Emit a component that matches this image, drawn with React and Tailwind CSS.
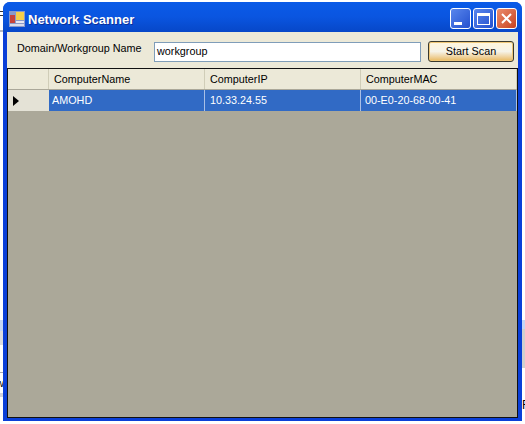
import React from "react";

function CaptionButton({ className, children }) {
  return (
    <div className={"w-[21px] h-[21px] rounded-[3px] border border-white flex items-center justify-center " + className}>
      {children}
    </div>
  );
}

function HeaderCell({ label }) {
  return (
    <div className="flex items-center pl-[5px] pt-[1px] border-r border-[#d0cdb8]">
      {label}
    </div>
  );
}

function RowCell({ label, className }) {
  return (
    <div className={"flex items-center bg-[#316ac5] border-r border-[#a9bfe6] " + className}>
      {label}
    </div>
  );
}

export default function App() {
  return (
    <div className="relative w-[525px] h-[424px] overflow-hidden bg-white font-['Liberation_Sans',sans-serif]">
      {/* bits of the desktop behind the window */}
      <div className="absolute left-0 top-[11px] w-[3px] h-[1px] bg-[#333333]" />
      <div className="absolute left-0 top-[15px] w-[3px] h-[1px] bg-[#333333]" />
      <div className="absolute left-0 top-[30px] w-[3px] h-[2px] bg-[#b8b8c0]" />
      <div className="absolute left-0 top-[320px] w-[3px] h-[11px] bg-[#c4d6f6]" />
      <div className="absolute left-0 top-[331px] w-[3px] h-[14px] bg-[#dcdce0]" />
      <div className="absolute left-0 top-[372px] w-[3px] h-[1px] bg-[#a8a8b0]" />
      <div className="absolute left-0 top-[393px] w-[3px] h-[4px] bg-[#d4d4dc]" />
      <div className="absolute left-[-4px] top-[376px] text-[11px] leading-[14px] text-black">w</div>
      <div className="absolute right-0 top-[320px] w-[3px] h-[9px] bg-[#c4d6f6]" />
      <div className="absolute right-0 top-[329px] w-[3px] h-[39px] bg-[#d0d0d0]" />
      <div className="absolute left-[522px] top-[398px] text-[12px] leading-[14px] text-black">F</div>

      <div className="absolute left-[3px] top-[2px] w-[519px] h-[419px] flex flex-col rounded-t-[7px] bg-[#0a3fd8] overflow-hidden">
        <div className="h-[30px] shrink-0 flex items-center pt-[3px] pl-[6px] pr-[5px] bg-gradient-to-b from-[#0a5be8] via-[#0a55e0] to-[#0747c8]">
          <svg width="16" height="16" viewBox="0 0 16 16" className="shrink-0 mt-[1px]">
            <rect x="0" y="0" width="16" height="16" fill="#8a9ac8" />
            <rect x="1" y="4" width="5" height="8" fill="#c8433a" />
            <rect x="7" y="1" width="8" height="8" fill="#f4cf4a" />
            <rect x="1" y="13" width="14" height="2" fill="#d8dcec" />
            <rect x="7" y="10" width="8" height="2" fill="#e8e8f0" />
          </svg>
          <span className="ml-[3px] mt-[2px] text-[13px] font-bold text-white [text-shadow:1px_1px_0_#0a2f9a]">Network Scanner</span>
          <div className="ml-auto flex gap-[2px]">
            <CaptionButton className="bg-gradient-to-br from-[#5a86ec] to-[#2450cf]">
              <div className="w-[8px] h-[3px] bg-white mt-[9px] mr-[5px]" />
            </CaptionButton>
            <CaptionButton className="bg-gradient-to-br from-[#5a86ec] to-[#2450cf]">
              <div className="w-[13px] h-[12px] border border-white border-t-[3px]" />
            </CaptionButton>
            <CaptionButton className="bg-gradient-to-br from-[#ea8c6c] to-[#c8401c]">
              <svg width="13" height="13" viewBox="0 0 13 13">
                <path d="M2 2 L11 11 M11 2 L2 11" stroke="#ffffff" strokeWidth="2" />
              </svg>
            </CaptionButton>
          </div>
        </div>

        <div className="flex-1 min-h-0 mx-[4px] mb-[3px] flex flex-col bg-[#ece9d8]">
          <div className="h-[36px] shrink-0 flex items-center pt-[3px] pl-[10px] pr-[4px] text-[10.8px] text-black">
            <span className="w-[137px] -mt-[6px]">Domain/Workgroup Name</span>
            <div className="w-[267px] h-[20px] flex items-center pl-[2px] bg-white border border-[#7f9db9]">workgroup</div>
            <div className="ml-[7px] w-[86px] h-[21px] flex items-center justify-center rounded-[3px] border border-[#3a3a2e] bg-gradient-to-b from-[#fff6dc] via-[#f6f3e8] to-[#e8b85c] shadow-[inset_0_0_0_1px_#f0c878]">
              Start Scan
            </div>
          </div>

          <div className="flex-1 min-h-0 flex flex-col bg-[#aba899] border border-[#111111] text-[10.8px]">
            <div className="h-[20px] shrink-0 grid grid-cols-[41px_156px_156px_156px] bg-[#ece9d8] text-black">
              <HeaderCell label="" />
              <HeaderCell label="ComputerName" />
              <HeaderCell label="ComputerIP" />
              <HeaderCell label="ComputerMAC" />
            </div>
            <div className="h-[21px] mt-[1px] shrink-0 grid grid-cols-[41px_156px_156px_156px] text-white">
              <div className="flex items-center pl-[5px] bg-[#e4e2d6]">
                <svg width="7" height="10" viewBox="0 0 7 10">
                  <path d="M0 0 L6 5 L0 10 Z" fill="#000000" />
                </svg>
              </div>
              <RowCell label="AMOHD" className="pl-[3px]" />
              <RowCell label="10.33.24.55" className="pl-[5px]" />
              <RowCell label="00-E0-20-68-00-41" className="pl-[4px]" />
            </div>
          </div>
        </div>
      </div>
    </div>
  );
}
